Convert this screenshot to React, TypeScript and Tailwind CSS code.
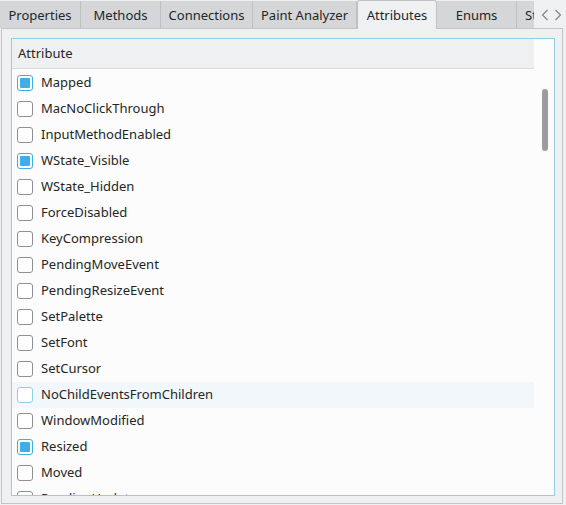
import React from "react";

const rows: { name: string; checked?: boolean; hover?: boolean }[] = [
  { name: "Mapped", checked: true },
  { name: "MacNoClickThrough" },
  { name: "InputMethodEnabled" },
  { name: "WState_Visible", checked: true },
  { name: "WState_Hidden" },
  { name: "ForceDisabled" },
  { name: "KeyCompression" },
  { name: "PendingMoveEvent" },
  { name: "PendingResizeEvent" },
  { name: "SetPalette" },
  { name: "SetFont" },
  { name: "SetCursor" },
  { name: "NoChildEventsFromChildren", hover: true },
  { name: "WindowModified" },
  { name: "Resized", checked: true },
  { name: "Moved" },
  { name: "PendingUpdate" },
];

const tabs = [
  { label: "Properties", w: "w-[81px]" },
  { label: "Methods", w: "w-[80px]" },
  { label: "Connections", w: "w-[92px]" },
  { label: "Paint Analyzer", w: "w-[104px]" },
];

function Checkbox({ checked, hover }: { checked?: boolean; hover?: boolean }) {
  const border = checked
    ? "border-[#3daee9]"
    : hover
    ? "border-[#93cee9]"
    : "border-[#8e9194]";
  return (
    <div
      className={`w-4 h-4 shrink-0 rounded-[3px] border bg-white flex items-center justify-center ${border}`}
    >
      {checked && <div className="w-[10px] h-[10px] bg-[#3daee9] rounded-[1px]" />}
    </div>
  );
}

export default function App() {
  return (
    <div
      className="w-[566px] h-[505px] bg-[#eff0f1] flex flex-col overflow-hidden text-[13px] text-[#232629]"
      style={{ fontFamily: '"Noto Sans", "DejaVu Sans", sans-serif' }}
    >
      <div className="h-[28px] flex items-end shrink-0">
        {tabs.map((t) => (
          <div
            key={t.label}
            className={`${t.w} h-[27px] bg-[#d4d6d8] border-r border-[#bfc1c3] flex items-center justify-center whitespace-nowrap pt-[2px]`}
          >
            {t.label}
          </div>
        ))}
        <div className="w-[80px] h-[29px] -mb-[1px] relative z-10 bg-[#eff0f1] border border-b-0 border-[#bfc1c3] rounded-t-[3px] flex items-center justify-center pt-[1px]">
          Attributes
        </div>
        <div className="w-[80px] h-[27px] bg-[#d4d6d8] border-r border-[#bfc1c3] flex items-center justify-center pt-[2px]">
          Enums
        </div>
        <div className="w-[17px] h-[27px] bg-[#d4d6d8] overflow-hidden flex items-center pl-[8px] pt-[2px] whitespace-nowrap">
          Styles
        </div>
        <div className="w-[32px] h-[28px] flex items-center justify-between pl-[7px] pr-[4px] pt-[2px] text-[#7c8083]">
          <svg width="8" height="12" viewBox="0 0 8 12">
            <path d="M6.5 1 L1.5 6 L6.5 11" fill="none" stroke="currentColor" strokeWidth="1.1" />
          </svg>
          <svg width="8" height="12" viewBox="0 0 8 12">
            <path d="M1.5 1 L6.5 6 L1.5 11" fill="none" stroke="currentColor" strokeWidth="1.1" />
          </svg>
        </div>
      </div>
      <div className="ml-[1px] w-[562px] h-[476px] border border-[#c3c5c7] pt-[9px] pl-[9px] pr-[7px] pb-[7px]">
        <div className="w-[544px] h-[458px] border border-[#93cee9] bg-[#fcfcfc] flex overflow-hidden">
          <div className="w-[522px] flex flex-col">
            <div className="h-[30px] shrink-0 bg-[#eff0f1] border-b border-[#dadcde] flex items-center pl-[6px] pt-[1px]">
              Attribute
            </div>
            <div className="flex flex-col pt-[1px]">
              {rows.map((r) => (
                <div
                  key={r.name}
                  className={`h-[26px] shrink-0 flex items-center pl-[5px] gap-2 ${
                    r.hover ? "bg-[#f2f7fb]" : ""
                  }`}
                >
                  <Checkbox checked={r.checked} hover={r.hover} />
                  <span className="whitespace-nowrap">{r.name}</span>
                </div>
              ))}
            </div>
          </div>
          <div className="flex-1 flex justify-center pt-[50px] pl-[1px]">
            <div className="w-[6px] h-[62px] rounded-full bg-[#9c9c9f]" />
          </div>
        </div>
      </div>
    </div>
  );
}
